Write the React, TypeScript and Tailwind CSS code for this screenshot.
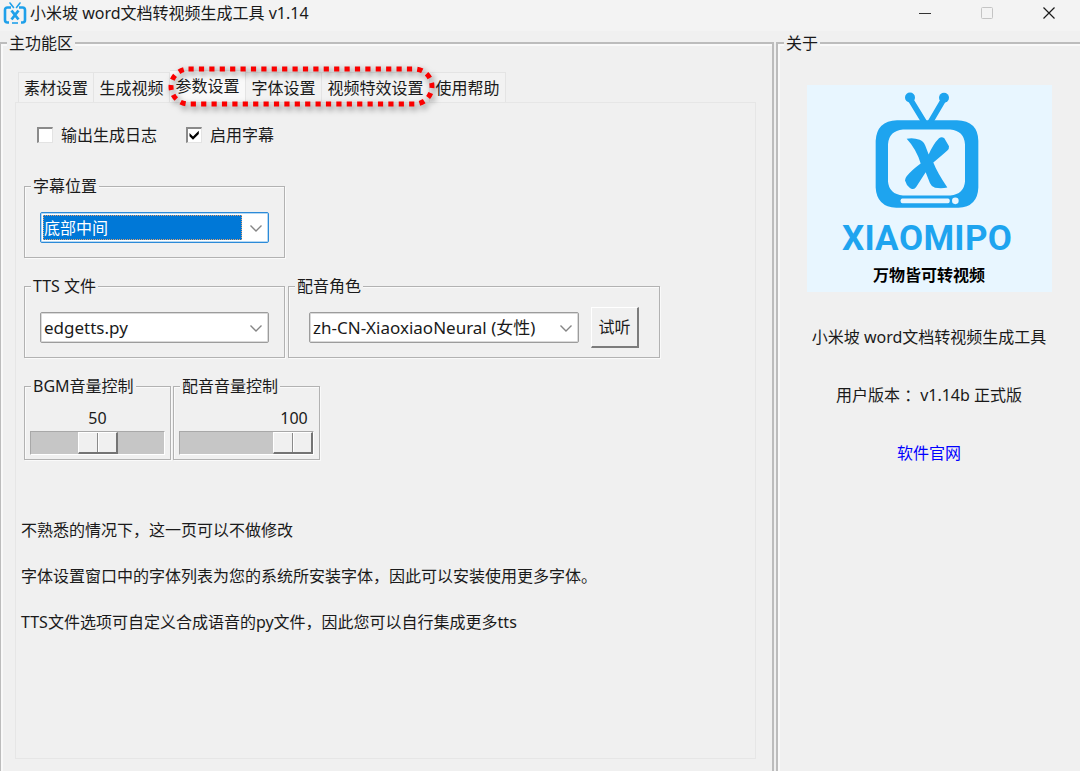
import React, { useState } from 'react';

const tabs = ['素材设置', '生成视频', '参数设置', '字体设置', '视频特效设置', '使用帮助'];

const notes = [
  '不熟悉的情况下，这一页可以不做修改',
  '字体设置窗口中的字体列表为您的系统所安装字体，因此可以安装使用更多字体。',
  'TTS文件选项可自定义合成语音的py文件，因此您可以自行集成更多tts',
];

const AppIcon: React.FC = () => (
  <svg viewBox="0 0 24 24" className="size-6 shrink-0" fill="none" stroke="#1fa0ea" aria-hidden="true">
    <path d="M10.500 6.500 7 2M13.500 6.500 17 2" strokeWidth="1.600" strokeLinecap="round" />
    <path d="M8 6.500H4.500Q2 6.500 2 9V19Q2 21.500 4.500 21.500H6M16 6.500H19.500Q22 6.500 22 9V19Q22 21.500 19.500 21.500H18" strokeWidth="2.600" />
    <path d="M9 22H15" strokeWidth="1.600" />
    <path d="M8.500 9.500 15.500 18.500M15.500 9.500 8.500 18.500" strokeWidth="2.800" />
  </svg>
);

const TvLogo: React.FC = () => (
  <svg viewBox="226 36 312 350" className="h-[117px] w-[104px]" aria-hidden="true">
    <g fill="#1ea4ef">
      <circle cx="331" cy="52" r="15" />
      <circle cx="433" cy="53" r="15" />
      <path d="M331 56 374 126M433 56 392 126" stroke="#1ea4ef" strokeWidth="17" />
      <path
        fillRule="evenodd"
        d="M292 120H472Q535 122 536 182V322Q534 380 476 383H290Q231 380 228 322V182Q231 122 292 120ZM310 148Q268 152 265 192V304Q268 342 310 346H452Q493 342 496 304V192Q493 152 452 148Z"
      />
      <path d="M321 176Q340 171 360 179Q372 184 377 197L387 223Q400 192 418 174Q426 168 434 174L448 198Q449 205 443 211Q431 222 401 247Q412 276 443 322Q427 326 406 323Q396 320 391 309L378 276L349 321Q340 331 330 323Q320 315 316 301Q316 294 321 288Q336 270 363 250Q350 207 321 176Z" />
    </g>
    <rect x="303" y="355" width="147" height="14" rx="5" fill="#e8f6ff" />
    <circle cx="467" cy="362" r="10" fill="#e8f6ff" />
  </svg>
);

const Chevron: React.FC = () => (
  <svg viewBox="0 0 24 24" className="pointer-events-none -ml-1 size-6 shrink-0 translate-x-0.5" fill="none" stroke="#858585" strokeWidth="1.400" aria-hidden="true">
    <path d="M6.500 9.500 12 15 17.500 9.500" />
  </svg>
);

type GroupProps = { title: string; className?: string; bodyClassName?: string; children: React.ReactNode };

const Group: React.FC<GroupProps> = ({ title, className, bodyClassName, children }) => (
  <fieldset className={`border border-[#b2b2b2] shadow-[1px_1px_0_#fafafa,inset_1px_1px_0_#fafafa] ${className ?? ''}`}>
    <legend className="ml-1.5 bg-[#f0f0f0] px-0.5 leading-6">{title}</legend>
    <div className={bodyClassName}>{children}</div>
  </fieldset>
);

type ComboProps = { label: string; options: string[]; active?: boolean; className?: string };

const Combo: React.FC<ComboProps> = ({ label, options, active, className }) => (
  <div
    className={`flex h-[31px] items-center rounded-xs border bg-white p-0.5 ${
      active ? 'border-[#2b8ad8] shadow-[inset_0_0_0_1px_#b5d8f3]' : 'border-[#9c9c9c] shadow-[inset_0_0_0_1px_#dadada]'
    } ${className ?? ''}`}
  >
    <select
      aria-label={label}
      className={`h-full min-w-0 flex-1 appearance-none outline-none ${
        active ? 'mr-1 border border-dotted border-[#e0a070] bg-[#0078d7] text-white' : 'bg-white px-px text-[17px] text-[#1a1a1a]'
      }`}
    >
      {options.map((option) => (
        <option key={option}>{option}</option>
      ))}
    </select>
    <Chevron />
  </div>
);

const CheckItem: React.FC<{ label: string; defaultChecked?: boolean }> = ({ label, defaultChecked }) => (
  <label className="flex items-center gap-2 leading-6">
    <span className="grid size-4">
      <input
        type="checkbox"
        defaultChecked={defaultChecked}
        className="peer size-4 appearance-none border-t-2 border-l-2 border-r border-b border-t-[#8a8a8a] border-l-[#8a8a8a] border-r-[#e3e3e3] border-b-[#e3e3e3] bg-white [grid-area:1/1]"
      />
      <svg viewBox="0 0 16 16" className="pointer-events-none invisible size-4 peer-checked:visible [grid-area:1/1]" aria-hidden="true">
        <path d="M3.500 6 7 9.500 12.800 3.700V7L7 12.800 3.500 9.300Z" fill="#000" />
      </svg>
    </span>
    {label}
  </label>
);

const VolumeScale: React.FC<{ title: string; initial: number }> = ({ title, initial }) => {
  const [value, setValue] = useState(initial);

  return (
    <Group title={title} className="w-[147px]" bodyClassName="px-[5px] pt-2 pb-1">
      <output
        className="mb-px block w-10 text-center leading-6"
        style={{ marginLeft: `calc((100% - 40px) * ${value / 100})` }}
      >
        {value}
      </output>
      <input
        type="range"
        min={0}
        max={100}
        value={value}
        aria-label={title}
        onChange={(e) => setValue(Number(e.target.value))}
        className="block h-6 w-full appearance-none border border-t-[#a8a8a8] border-l-[#a8a8a8] border-r-white border-b-white bg-[#c6c6c6] [&::-webkit-slider-thumb]:h-[22px] [&::-webkit-slider-thumb]:w-10 [&::-webkit-slider-thumb]:appearance-none [&::-webkit-slider-thumb]:border-t [&::-webkit-slider-thumb]:border-l [&::-webkit-slider-thumb]:border-r-2 [&::-webkit-slider-thumb]:border-b-2 [&::-webkit-slider-thumb]:border-t-white [&::-webkit-slider-thumb]:border-l-white [&::-webkit-slider-thumb]:border-r-[#747474] [&::-webkit-slider-thumb]:border-b-[#747474] [&::-webkit-slider-thumb]:bg-[linear-gradient(90deg,#f0f0f0_18px,#8a8a8a_18px,#8a8a8a_19px,#fff_19px,#fff_20px,#f0f0f0_20px)]"
      />
    </Group>
  );
};

const TitleBar: React.FC = () => (
  <header className="flex h-[31px] items-center bg-[#f3f3f3] pb-1.5 pl-[3px]">
    <AppIcon />
    <h1 className="ml-[3px] flex-1 leading-6">小米坡 word文档转视频生成工具 v1.14</h1>
    <button aria-label="最小化" className="flex h-6 w-[62px] items-center justify-center">
      <svg viewBox="0 0 12 12" className="size-3" stroke="#333">
        <path d="M0 6.500H12" />
      </svg>
    </button>
    <button aria-label="最大化" disabled className="flex h-6 w-[62px] items-center justify-center">
      <svg viewBox="0 0 12 12" className="size-3" stroke="#c4c4c4" fill="none">
        <rect x="0.500" y="0.500" width="11" height="11" rx="1" />
      </svg>
    </button>
    <button aria-label="关闭" className="flex h-6 w-[62px] items-center justify-center">
      <svg viewBox="0 0 12 12" className="size-3" stroke="#1a1a1a" strokeWidth="1.200">
        <path d="M0.500 0.500 11.500 11.500M11.500 0.500 0.500 11.500" />
      </svg>
    </button>
  </header>
);

const TabBar: React.FC<{ active: string; onSelect: (tab: string) => void }> = ({ active, onSelect }) => (
  <div role="tablist" className="relative flex items-end pl-[3px]">
    {tabs.map((tab) => (
      <button
        key={tab}
        role="tab"
        aria-selected={tab === active}
        onClick={() => onSelect(tab)}
        className={`border-t border-r border-[#e4e4e4] text-center whitespace-nowrap first:border-l ${
          tab.length > 4 ? 'w-27' : 'w-19'
        } ${tab === active ? 'h-8 bg-[#f9f9f9] pb-0.5' : 'h-[30px] bg-[#f2f2f2]'}`}
      >
        {tab}
      </button>
    ))}
    {/* callout around the three settings tabs */}
    <svg
      viewBox="0 0 270 44"
      className="pointer-events-none absolute -top-1.5 left-[152px] h-11 w-[270px] overflow-visible drop-shadow-[2px_3px_3px_rgba(0,0,0,0.55)]"
      fill="none"
      aria-hidden="true"
    >
      <rect x="4" y="5" width="261" height="35" rx="17.500" stroke="#fa0000" strokeWidth="5" strokeDasharray="5.200 5.200" />
    </svg>
  </div>
);

const SettingsPanel: React.FC = () => (
  <div role="tabpanel" className="flex-1 border border-[#e6e6e6] pt-5 pl-[5px]">
    <div className="flex gap-[29px] pl-4">
      <CheckItem label="输出生成日志" />
      <CheckItem label="启用字幕" defaultChecked />
    </div>

    <div className="mt-[27px] flex flex-col gap-4 pl-[3px]">
      <div className="flex">
        <Group title="字幕位置" className="w-[261px]" bodyClassName="px-[15px] py-[14px]">
          <Combo label="字幕位置" options={['底部中间', '顶部中间', '居中']} active />
        </Group>
      </div>

      <div className="flex gap-[3px]">
        <Group title="TTS 文件" className="w-[261px]" bodyClassName="px-[15px] py-[14px]">
          <Combo label="TTS 文件" options={['edgetts.py']} />
        </Group>
        <Group title="配音角色" className="w-[372px]" bodyClassName="flex items-center gap-3 px-5 pt-[9px]">
          <Combo label="配音角色" options={['zh-CN-XiaoxiaoNeural (女性)']} className="min-w-0 flex-1" />
          <button className="h-[41px] w-12 border-t border-r-2 border-b-2 border-l border-t-white border-r-[#7c7c7c] border-b-[#7c7c7c] border-l-white bg-[#f0f0f0]">
            试听
          </button>
        </Group>
      </div>

      <div className="flex gap-0.5">
        <VolumeScale title="BGM音量控制" initial={50} />
        <VolumeScale title="配音音量控制" initial={100} />
      </div>
    </div>

    <div className="mt-[58px] flex flex-col gap-[22px] leading-6">
      {notes.map((note) => (
        <p key={note}>{note}</p>
      ))}
    </div>
  </div>
);

const About: React.FC = () => (
  <fieldset className="w-[304px] border-t-2 border-l-2 border-[#bcbcbc] shadow-[inset_2px_2px_0_#f9f9f9]">
    <legend className="ml-1.5 bg-[#f0f0f0] px-0.5 leading-6">关于</legend>
    <div className="flex flex-col items-center pt-[30px] leading-6">
      <div className="mb-[33px] flex h-[207px] w-[245px] flex-col items-center bg-[#e8f6ff] pt-[7px] pr-1">
        <TvLogo />
        <div className="mt-2 flex w-[170px] justify-between font-[Roboto,sans-serif] text-[35px] leading-[44px] font-bold text-[#1ea4ef]">
          {'XIAOMIPO'.split('').map((letter, i) => (
            <span key={i}>{letter}</span>
          ))}
        </div>
        <p className="mt-0.5 pl-1 font-bold text-black">万物皆可转视频</p>
      </div>
      <div className="flex flex-col items-center gap-[34px]">
        <p>小米坡 word文档转视频生成工具</p>
        <p>用户版本 ：v1.14b 正式版</p>
        <a href="#" className="text-[#0000ff]">
          软件官网
        </a>
      </div>
    </div>
  </fieldset>
);

const App: React.FC = () => {
  const [activeTab, setActiveTab] = useState('参数设置');

  return (
    <div className="flex min-h-screen flex-col bg-[#f0f0f0] font-['Noto_Sans','Noto_Sans_CJK_SC',sans-serif] text-base text-[#1a1a1a]">
      <TitleBar />
      <main className="flex flex-1 gap-0.5">
        <fieldset className="flex min-w-0 flex-1 flex-col border-t-2 border-r-2 border-l border-[#bcbcbc] shadow-[inset_2px_2px_0_#f9f9f9]">
          <legend className="ml-1.5 bg-[#f0f0f0] px-0.5 leading-6">主功能区</legend>
          <div className="flex flex-1 flex-col pt-[15px] pr-4 pb-3 pl-[14px]">
            <TabBar active={activeTab} onSelect={setActiveTab} />
            <SettingsPanel />
          </div>
        </fieldset>
        <About />
      </main>
    </div>
  );
};

export default App;
